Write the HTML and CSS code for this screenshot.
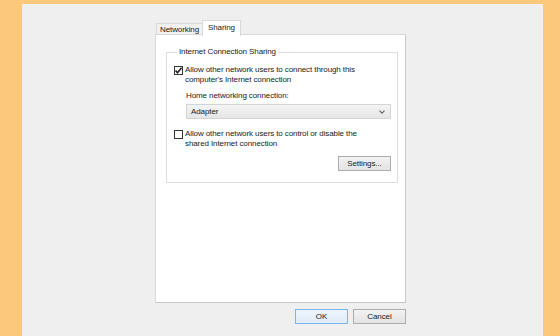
FILE: index.html
```html
<!DOCTYPE html>
<html>
<head>
<meta charset="utf-8">
<link rel="stylesheet" href="styles.css">
</head>
<body>
<div class="dialog">
  <div class="tabs">
    <div class="tab">Networking</div>
    <div class="tab active">Sharing</div>
  </div>
  <div class="panel">
    <fieldset class="group">
      <legend>Internet Connection Sharing</legend>
      <div class="check">
        <span class="box checked"><svg width="9" height="9" viewBox="0 0 9 9"><path d="M1.5 4.5 L3.5 6.8 L7.6 1.8" fill="none" stroke="#222" stroke-width="1.6"/></svg></span>
        <span class="label">Allow other network users to connect through this<br>computer's Internet connection</span>
      </div>
      <div class="field-label">Home networking connection:</div>
      <div class="select">
        <span>Adapter</span>
        <svg width="6" height="4" viewBox="0 0 6 4"><path d="M0.5 0.6 L3 3.2 L5.5 0.6" fill="none" stroke="#666" stroke-width="1.1"/></svg>
      </div>
      <div class="check second">
        <span class="box"></span>
        <span class="label">Allow other network users to control or disable the<br>shared Internet connection</span>
      </div>
      <div class="settings-row">
        <button class="btn">Settings...</button>
      </div>
    </fieldset>
  </div>
  <div class="actions">
    <button class="btn primary">OK</button>
    <button class="btn">Cancel</button>
  </div>
</div>
</body>
</html>
```
FILE: styles.css
```css
html, body {
  margin: 0;
  padding: 0;
}
body {
  background: #fcc87b;
  width: 560px;
  height: 336px;
  overflow: hidden;
  font-family: "Liberation Sans", Arial, sans-serif;
  font-size: 8px;
  letter-spacing: -0.1px;
  color: #1a1a1a;
}
.dialog {
  margin: 4px 0 0 22px;
  width: 521px;
  height: 332px;
  background: #efefef;
  box-sizing: border-box;
  padding: 16px 0 0 133px;
  display: flex;
  flex-direction: column;
}
.tabs {
  display: flex;
  align-items: flex-end;
  height: 15px;
  padding-left: 1px;
  position: relative;
  z-index: 1;
}
.tab {
  height: 11px;
  box-sizing: border-box;
  border: 1px solid #d9d9d9;
  border-bottom: none;
  background: #f0f0f0;
  padding: 0 3px;
  line-height: 11px;
  margin-bottom: 1px;
}
.tab.active {
  height: 16px;
  background: #fff;
  border-color: #d9d9d9;
  padding: 0 5px;
  line-height: 13px;
  margin-bottom: -1px;
  margin-left: -1px;
}
.panel {
  width: 251px;
  height: 269px;
  box-sizing: border-box;
  background: #fff;
  border: 1px solid #d9d9d9;
  border-right-color: #c8c8c8;
  border-bottom-color: #c8c8c8;
  margin-top: -1px;
  padding: 12px 7px 0 10px;
}
.group {
  margin: 0;
  border: 1px solid #dcdcdc;
  padding: 8px 5px 9px 7px;
  height: 136px;
  box-sizing: border-box;
}
.group legend {
  padding: 0 2px;
  margin-left: 3px;
  line-height: 10px;
}
.check {
  display: flex;
  align-items: flex-start;
  gap: 2px;
}
.box {
  width: 9px;
  height: 9px;
  border: 1px solid #333;
  background: #fff;
  box-sizing: border-box;
  flex: none;
  margin-top: 1px;
  display: flex;
  align-items: center;
  justify-content: center;
}
.box svg {
  flex: none;
}
.label {
  line-height: 10px;
}
.field-label {
  margin: 6px 0 0 12px;
  line-height: 10px;
}
.select {
  margin: 3px 0 0 12px;
  height: 15px;
  width: 205px;
  box-sizing: border-box;
  border: 1px solid #d4d4d4;
  background: linear-gradient(#f4f4f4, #e6e6e6);
  display: flex;
  align-items: center;
  justify-content: space-between;
  padding: 0 5px 0 4px;
}
.check.second {
  margin-top: 10px;
}
.settings-row {
  display: flex;
  justify-content: flex-end;
  margin-top: 7px;
  padding-right: 1px;
}
.btn {
  font-family: "Liberation Sans", Arial, sans-serif;
  font-size: 8px;
  letter-spacing: -0.1px;
  color: #1a1a1a;
  width: 53px;
  height: 15px;
  padding: 0;
  border: 1px solid #adadad;
  background: linear-gradient(#f2f2f2, #e3e3e3);
  margin: 0;
}
.actions {
  display: flex;
  justify-content: flex-start;
  gap: 5px;
  margin-top: 6px;
  padding-left: 140px;
}
.btn.primary {
  border-color: #7eb4ea;
  background: linear-gradient(#edf5fc, #e1ebf7);
}
```
